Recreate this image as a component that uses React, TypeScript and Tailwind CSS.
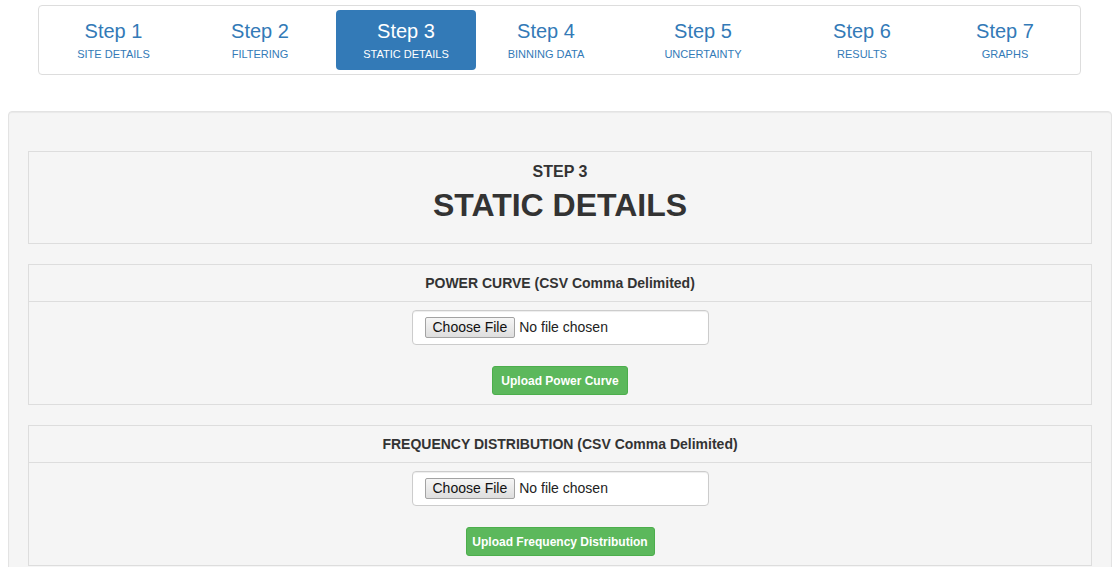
const STEPS = [
  { n: 1, label: 'Site Details', w: 'w-[141px]' },
  { n: 2, label: 'Filtering', w: 'w-[148px]' },
  { n: 3, label: 'Static Details', w: 'w-[140px]' },
  { n: 4, label: 'Binning Data', w: 'w-[136px]' },
  { n: 5, label: 'Uncertainty', w: 'w-[174px]' },
  { n: 6, label: 'Results', w: 'w-[140px]' },
  { n: 7, label: 'Graphs', w: 'w-[142px]' },
]

const ACTIVE = 3

function FakeFileInput() {
  return (
    <div className="w-[297px] h-[35px] bg-white border border-[#ccc] rounded-[4px] shadow-[inset_0_1px_1px_rgba(0,0,0,0.075)] flex items-center pl-[12px]">
      <span className="h-[21px] px-[7px] flex items-center border border-[#a3a3a3] rounded-[2px] bg-gradient-to-b from-[#f6f6f6] to-[#dedede] text-[14px] text-[#111]">
        Choose File
      </span>
      <span className="ml-[4px] text-[14px] text-[#222]">No file chosen</span>
    </div>
  )
}

function UploadPanel({ title, button, btnW }: { title: string; button: string; btnW: string }) {
  return (
    <div className="border border-[#ddd] mt-[20px]">
      <div className="h-[37px] border-b border-[#ddd] flex items-center justify-center text-[14px] font-bold text-[#333]">
        {title}
      </div>
      <div className="flex flex-col items-center pt-[8px] pb-[9px]">
        <FakeFileInput />
        <button className={`${btnW} mt-[21px] h-[29px] bg-[#5cb85c] border border-[#4cae4c] rounded-[3px] text-white text-[12px] font-bold`}>
          {button}
        </button>
      </div>
    </div>
  )
}

export default function App() {
  return (
    <div className="min-h-[567px] bg-white font-['Liberation_Sans',Arial,sans-serif] overflow-hidden">
      <div className="w-[1043px] ml-[38px] mt-[5px] border border-[#ddd] rounded-[4px] p-[4px] flex gap-[2px]">
        {STEPS.map((s) => {
          const active = s.n === ACTIVE
          return (
            <div
              key={s.n}
              className={`${s.w} h-[60px] rounded-[4px] flex flex-col items-center justify-center ${active ? 'bg-[#337ab7] text-white' : 'text-[#337ab7]'}`}
            >
              <div className="text-[20px] leading-[22px]">Step {s.n}</div>
              <div className="text-[11px] leading-[14px] mt-[5px] uppercase">{s.label}</div>
            </div>
          )
        })}
      </div>

      <div className="mx-[8px] mt-[36px] bg-[#f5f5f5] border border-[#e3e3e3] rounded-[4px] shadow-[inset_0_1px_1px_rgba(0,0,0,0.05)] px-[19px] pt-[39px] pb-[20px]">
        <div className="border border-[#ddd] h-[93px] flex flex-col items-center text-[#333]">
          <div className="mt-[10px] text-[16px] leading-[20px] font-bold">STEP 3</div>
          <div className="mt-[3px] text-[32px] leading-[40px] font-bold">STATIC DETAILS</div>
        </div>

        <UploadPanel title="POWER CURVE (CSV Comma Delimited)" button="Upload Power Curve" btnW="w-[136px]" />
        <UploadPanel title="FREQUENCY DISTRIBUTION (CSV Comma Delimited)" button="Upload Frequency Distribution" btnW="w-[189px]" />
      </div>
    </div>
  )
}
